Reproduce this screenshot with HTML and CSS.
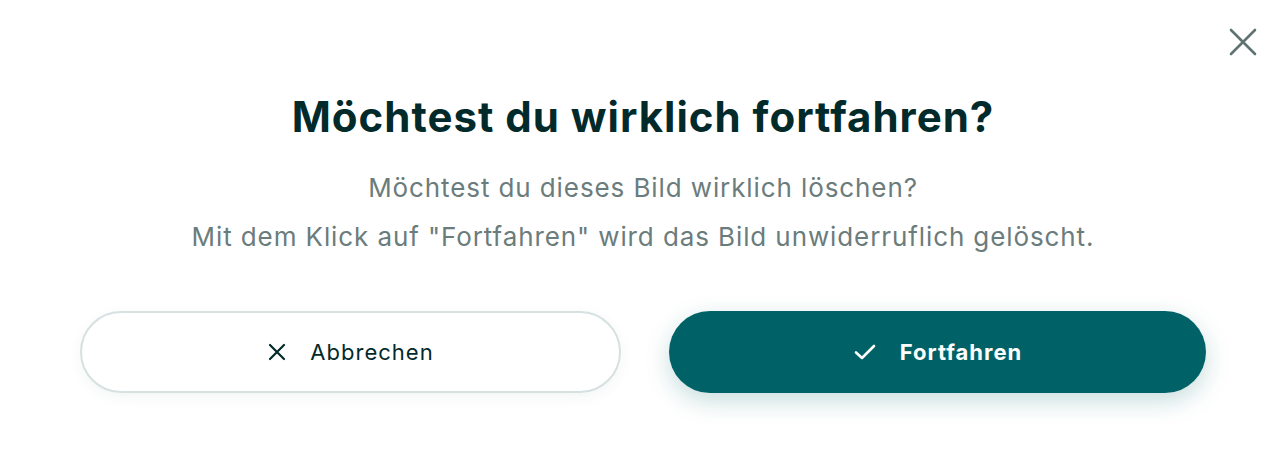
FILE: index.html
```html
<!DOCTYPE html>
<html lang="de">
<head>
    <meta charset="UTF-8">
    <meta name="viewport" content="width=device-width, initial-scale=1.0">
    <title>Bild löschen</title>
    <link rel="stylesheet" href="styles.css">
</head>
<body>
    <div class="dialog">
        <button class="close" title="Schließen">
            <svg width="28" height="28" viewBox="0 0 28 28" fill="none" stroke="currentColor" stroke-width="2.6" stroke-linecap="round">
                <path d="M2 2 L26 26 M26 2 L2 26"/>
            </svg>
        </button>

        <h1 class="title">Möchtest du wirklich fortfahren?</h1>

        <div class="text">
            <p>Möchtest du dieses Bild wirklich löschen?</p>
            <p>Mit dem Klick auf "Fortfahren" wird das Bild unwiderruflich gelöscht.</p>
        </div>

        <div class="actions">
            <button class="btn btn-cancel">
                <svg width="20" height="20" viewBox="0 0 20 20" fill="none" stroke="currentColor" stroke-width="2.2" stroke-linecap="round">
                    <path d="M3 3 L17 17 M17 3 L3 17"/>
                </svg>
                Abbrechen
            </button>
            <button class="btn btn-confirm">
                <svg width="24" height="24" viewBox="0 0 24 24" fill="none" stroke="currentColor" stroke-width="2.6" stroke-linecap="round" stroke-linejoin="round">
                    <path d="M3 12.5 L9 18 L21 6"/>
                </svg>
                Fortfahren
            </button>
        </div>
    </div>
</body>
</html>
```

FILE: styles.css
```css
:root {
    --teal: #006266;
    --dark: #032a2b;
    --gray: #6b7c7c;
    --border: #d6e1e1;
}

* {
    margin: 0;
    padding: 0;
    box-sizing: border-box;
    font-family: 'Inter', 'Noto Sans', sans-serif;
}

body {
    background: white;
    color: var(--dark);
}

.dialog {
    position: relative;
    width: 1287px;
    height: 458px;
    padding: 86px 81px 0 80px;
    text-align: center;
}

.close {
    position: absolute;
    top: 28px;
    right: 30px;
    border: none;
    background: none;
    color: #5f7373;
    cursor: pointer;
    display: flex;
}

.title {
    font-size: 42px;
    font-weight: 700;
    letter-spacing: 1px;
    line-height: 62px;
    color: var(--dark);
}

.text {
    margin-top: 24px;
    color: var(--gray);
    font-size: 26px;
    letter-spacing: 0.9px;
    line-height: 32px;
    display: flex;
    flex-direction: column;
    gap: 17px;
}

.actions {
    margin-top: 58px;
    display: flex;
    gap: 48px;
}

.btn {
    flex: 1;
    height: 82px;
    border-radius: 41px;
    display: flex;
    align-items: center;
    justify-content: center;
    gap: 23px;
    font-size: 22px;
    letter-spacing: 1px;
    cursor: pointer;
}

.btn-cancel {
    background: white;
    border: 2px solid var(--border);
    color: var(--dark);
    font-weight: 400;
    box-shadow: 0 4px 14px rgba(0, 60, 60, 0.05);
}

.btn-confirm {
    background: var(--teal);
    border: none;
    color: white;
    font-weight: 700;
    box-shadow: 0 8px 24px rgba(0, 98, 102, 0.22);
}
```
